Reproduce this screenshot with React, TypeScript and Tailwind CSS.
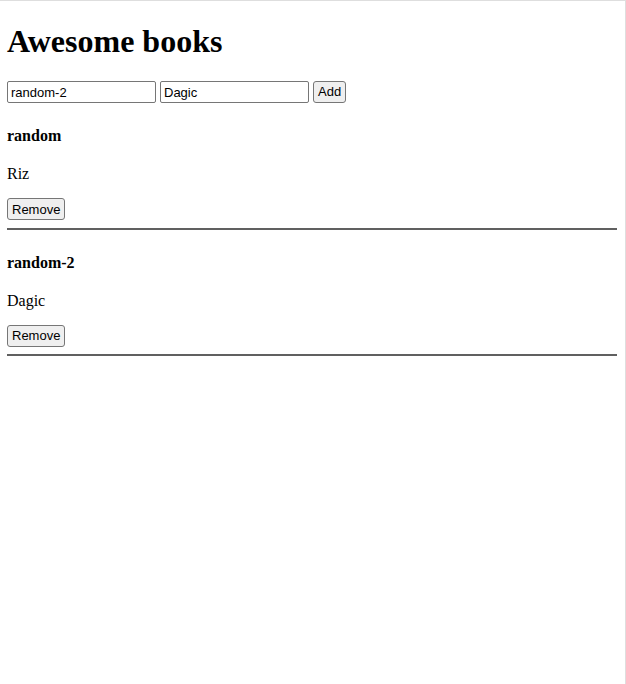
const books = [
  { title: "random", author: "Riz" },
  { title: "random-2", author: "Dagic" },
];

export default function App() {
  return (
    <div className="min-h-screen bg-white border-t border-r border-[#dedede] pl-[7px] pr-[8px] font-['Liberation_Serif',serif] text-black">
      <h1 className="mt-[22px] mb-[21px] text-[32px] font-bold leading-[37px]">
        Awesome books
      </h1>
      <form className="flex gap-[4px] font-['Liberation_Sans',Arial,sans-serif] text-[13px]">
        <input
          defaultValue="random-2"
          className="h-[22px] w-[149px] rounded-[2px] border border-[#767676] px-[3px] outline-none"
        />
        <input
          defaultValue="Dagic"
          className="h-[22px] w-[149px] rounded-[2px] border border-[#767676] px-[3px] outline-none"
        />
        <button
          type="button"
          className="h-[22px] rounded-[3px] border border-[#767676] bg-[#efefef] px-[4px]"
        >
          Add
        </button>
      </form>
      <div>
        {books.map((book, i) => (
          <div key={i}>
            <h4 className="mt-[24px] text-[16px] font-bold leading-[18px]">{book.title}</h4>
            <p className="mt-[20px] text-[16px] leading-[18px]">{book.author}</p>
            <button
              type="button"
              className="mt-[15px] h-[22px] rounded-[3px] border border-[#767676] bg-[#efefef] px-[4px] font-['Liberation_Sans',Arial,sans-serif] text-[13px] leading-none"
            >
              Remove
            </button>
            <hr className="mt-[7px] mb-0 border-0 h-[2px] bg-[#606060]" />
          </div>
        ))}
      </div>
    </div>
  );
}
